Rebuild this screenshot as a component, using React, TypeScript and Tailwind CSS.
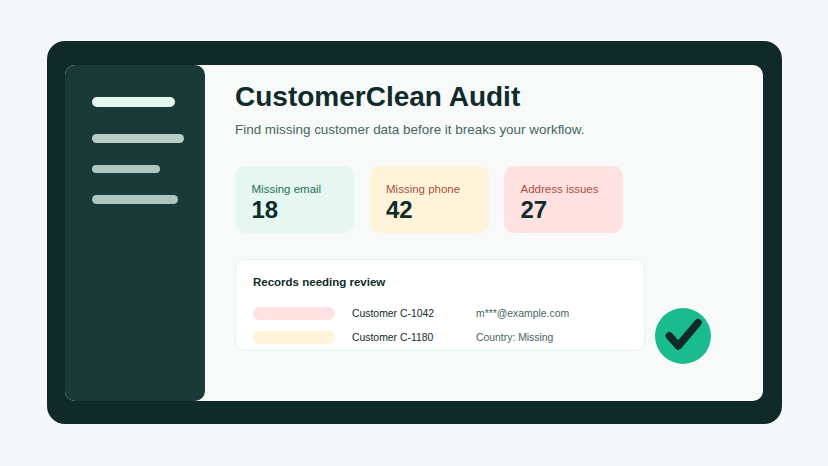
import React from "react";

const font = { fontFamily: '"Liberation Sans", Arial, sans-serif' };

const navBars = [
  { width: "w-[83px]", color: "bg-[#e6f6f0]", gap: "mb-[27px]", height: "h-[10px]" },
  { width: "w-[92px]", color: "bg-[#b9cdc7]", gap: "mb-[22px]", height: "h-[8.5px]" },
  { width: "w-[68px]", color: "bg-[#adc6bf]", gap: "mb-[22px]", height: "h-[8.5px]" },
  { width: "w-[86px]", color: "bg-[#adc6bf]", gap: "", height: "h-[8.5px]" },
];

const stats = [
  { label: "Missing email", value: "18", bg: "bg-[#e6f6f0]", text: "text-[#1f6f5c]" },
  { label: "Missing phone", value: "42", bg: "bg-[#fff3d9]", text: "text-[#a9503f]" },
  { label: "Address issues", value: "27", bg: "bg-[#ffe1e1]", text: "text-[#a9503f]" },
];

const records = [
  { pill: "bg-[#ffe1e1]", name: "Customer C-1042", detail: "m***@example.com" },
  { pill: "bg-[#fff3d9]", name: "Customer C-1180", detail: "Country: Missing" },
];

export default function App() {
  return (
    <div className="h-[466px] w-[828px] bg-[#f5f7fa] pt-[41px] pl-[46.5px]" style={font}>
      <div className="relative h-[383px] w-[735px] rounded-[18px] bg-[#102a2a] pt-[24px] pl-[18.5px]">
        <div className="flex h-[336px] w-[698px] rounded-[10px] bg-[#f8fafa]">
          <aside className="h-full w-[140px] shrink-0 rounded-[10px] bg-[#1a3a38] pt-[32px] pl-[27px]">
            {navBars.map((bar, i) => (
              <div key={i} className={`${bar.width} ${bar.height} ${bar.color} ${bar.gap} rounded-full`} />
            ))}
          </aside>

          <main className="flex-1 pt-[14px] pl-[30px]">
            <h1 className="text-[28px] leading-[36px] font-bold text-[#0f2b2b]">CustomerClean Audit</h1>
            <p className="mt-[5px] text-[13.45px] leading-[20px] text-[#446660]">
              Find missing customer data before it breaks your workflow.
            </p>

            <div className="mt-[26px] flex gap-[15.5px]">
              {stats.map((s) => (
                <div key={s.label} className={`h-[67px] w-[119px] rounded-[10px] pt-[16px] pl-[16.5px] ${s.bg}`}>
                  <div className={`text-[11.5px] leading-[14px] ${s.text}`}>{s.label}</div>
                  <div className="text-[24px] leading-[27px] font-bold text-[#0f2b2b]">{s.value}</div>
                </div>
              ))}
            </div>

            <section className="mt-[25.5px] h-[92.5px] w-[409.5px] rounded-[10px] border border-[#e6f4ef] bg-white pt-[15.5px] pl-[17px]">
              <h2 className="text-[11.5px] leading-[15px] font-bold text-[#0f2b2b]">Records needing review</h2>
              <div className="mt-[17px] flex flex-col gap-[11px]">
                {records.map((r) => (
                  <div key={r.name} className="flex h-[13px] items-center">
                    <div className={`h-[13px] w-[82px] rounded-full ${r.pill}`} />
                    <span className="ml-[17px] w-[124px] text-[10.4px] text-[#0f2b2b]">{r.name}</span>
                    <span className="text-[10.4px] text-[#446660]">{r.detail}</span>
                  </div>
                ))}
              </div>
            </section>
          </main>
        </div>

        {/* check badge floats over the panel */}
        <div className="absolute top-[267px] left-[608.5px] flex h-[56px] w-[56px] items-center justify-center rounded-full bg-[#1abc8f]">
          <svg width="56" height="56" viewBox="0 0 56 56" fill="none">
            <path
              d="M14.3 27.7 L23.3 38 L43 14.7"
              stroke="#102a2a"
              strokeWidth="7.5"
              strokeLinecap="round"
              strokeLinejoin="round"
            />
          </svg>
        </div>
      </div>
    </div>
  );
}
